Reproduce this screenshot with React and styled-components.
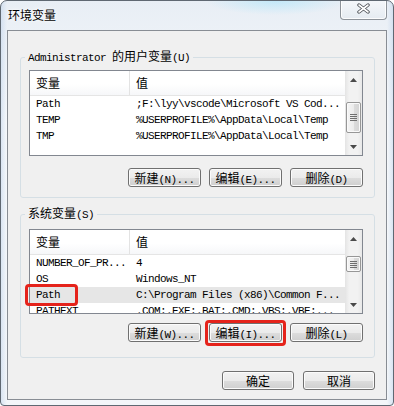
import React from 'react';
import styled, { createGlobalStyle, css } from 'styled-components';

const GlobalStyle = createGlobalStyle`
  html, body { margin: 0; padding: 0; background: #ffffff; }
  body {
    font-family: "Noto Sans CJK SC", sans-serif;
    font-size: 12px;
    color: #000;
  }
  * { box-sizing: border-box; }
`;

const userVars = [
  { name: 'Path', value: ';F:\\lyy\\vscode\\Microsoft VS Cod...' },
  { name: 'TEMP', value: '%USERPROFILE%\\AppData\\Local\\Temp' },
  { name: 'TMP', value: '%USERPROFILE%\\AppData\\Local\\Temp' },
];

const systemVars = [
  { name: 'NUMBER_OF_PR...', value: '4' },
  { name: 'OS', value: 'Windows_NT' },
  { name: 'Path', value: 'C:\\Program Files (x86)\\Common F...', selected: true },
  { name: 'PATHEXT', value: '.COM;.EXE;.BAT;.CMD;.VBS;.VBE;...' },
];

const Arrow = ({ down }) => (
  <svg width="7" height="4" viewBox="0 0 7 4">
    <polygon points={down ? '0,0 7,0 3.5,4' : '0,4 7,4 3.5,0'} fill="#4a4a4a" />
  </svg>
);

const CloseGlyph = () => (
  <svg width="15" height="11" viewBox="0 0 15 11">
    <g strokeLinecap="round">
      <path d="M3 2 L12 9 M12 2 L3 9" stroke="#4b4f55" strokeWidth="3.4" />
      <path d="M3 2 L12 9 M12 2 L3 9" stroke="#ffffff" strokeWidth="1.6" />
    </g>
  </svg>
);

const VarList = ({ rows, height, thumbOffset, thumbSize, marker }) => (
  <ListBox $h={height}>
    <Table>
      <Header>
        <HeadCell $name>变量</HeadCell>
        <HeadCell>值</HeadCell>
      </Header>
      {rows.map((r) => (
        <Row key={r.name} $selected={r.selected}>
          <NameCell>{r.name}</NameCell>
          <ValueCell>{r.value}</ValueCell>
        </Row>
      ))}
    </Table>
    <ScrollBar>
      <ArrowButton><Arrow /></ArrowButton>
      <Track $offset={thumbOffset}>
        <Thumb $size={thumbSize}><Grip /></Thumb>
      </Track>
      <ArrowButton><Arrow down /></ArrowButton>
    </ScrollBar>
    {marker && <RowMarker />}
  </ListBox>
);

export default function App() {
  return (
    <>
      <GlobalStyle />
      <Window>
        <TitleBar>
          <Title>环境变量</Title>
          <CloseButton><CloseGlyph /></CloseButton>
        </TitleBar>
        <Client>
          <Group $top={18} $padTop={5} $padBottom={10}>
            <Legend><Ascii>Administrator </Ascii>的用户变量<Ascii>(U)</Ascii></Legend>
            <VarList rows={userVars} height={86} thumbOffset={14} thumbSize={31} />
            <ButtonRow $gap={12}>
              <Button>新建<Ascii>(N)...</Ascii></Button>
              <Button>编辑<Ascii>(E)...</Ascii></Button>
              <Button>删除<Ascii>(D)</Ascii></Button>
            </ButtonRow>
          </Group>
          <Group $top={8} $padTop={7} $padBottom={15}>
            <Legend>系统变量<Ascii>(S)</Ascii></Legend>
            <VarList rows={systemVars} height={85} thumbOffset={9} thumbSize={16} marker />
            <ButtonRow $gap={9}>
              <Button>新建<Ascii>(W)...</Ascii></Button>
              <Button $marked>编辑<Ascii>(I)...</Ascii></Button>
              <Button>删除<Ascii>(L)</Ascii></Button>
            </ButtonRow>
          </Group>
          <DialogButtons>
            <Button $w={72}>确定</Button>
            <Button $w={72}>取消</Button>
          </DialogButtons>
        </Client>
      </Window>
    </>
  );
}

const Window = styled.div`
  width: 394px;
  height: 406px;
  border: 1px solid #5f6872;
  border-radius: 7px 7px 4px 4px;
  background:
    radial-gradient(ellipse 70px 14px at 275px 0px, rgba(170, 228, 250, 0.6), transparent),
    linear-gradient(90deg, rgba(190, 210, 235, 0.5) 0px, transparent 6px, transparent 386px, rgba(190, 210, 235, 0.5) 392px),
    linear-gradient(180deg, #e8eef5 0%, #f7f9fb 30%, #f3f6f9 100%);
  display: flex;
  flex-direction: column;
  overflow: hidden;
`;

const TitleBar = styled.div`
  height: 29px;
  flex-shrink: 0;
  display: flex;
  justify-content: space-between;
  align-items: flex-start;
  padding-left: 7px;
`;

const Title = styled.div`
  padding-top: 6px;
  font-size: 12px;
  line-height: 16px;
  text-shadow: 0 0 5px #fff, 0 0 2px #fff;
`;

const CloseButton = styled.div`
  width: 47px;
  height: 20px;
  margin-top: -1px;
  margin-right: 6px;
  padding-top: 3px;
  border: 1px solid #8d939a;
  border-top: none;
  border-radius: 0 0 4px 4px;
  background: linear-gradient(180deg, rgba(255, 255, 255, 0.55), rgba(228, 234, 240, 0.8));
  box-shadow: inset 0 0 0 1px rgba(255, 255, 255, 0.85);
  display: flex;
  justify-content: center;
`;

const Client = styled.div`
  flex: 1;
  margin: 0 6px 5px;
  border: 1px solid #888d94;
  background: #f0f0f0;
  display: flex;
  flex-direction: column;
`;

const Group = styled.fieldset`
  margin: ${(p) => p.$top}px 11px 0 12px;
  padding: ${(p) => p.$padTop}px 11px ${(p) => p.$padBottom}px 8px;
  border: 1px solid #d5dfe5;
  border-radius: 3px;
  min-width: 0;
`;

const Legend = styled.legend`
  margin-left: -4px;
  padding: 0 3px;
  font-size: 12px;
  line-height: 14px;
  white-space: nowrap;
`;

const Ascii = styled.span`
  font-family: "Liberation Mono", monospace;
  font-size: 11px;
  letter-spacing: -0.6px;
`;

const ListBox = styled.div`
  position: relative;
  height: ${(p) => p.$h}px;
  border: 1px solid #828790;
  background: #ffffff;
  display: flex;
`;

const Table = styled.div`
  flex: 1;
  min-width: 0;
  overflow: hidden;
`;

const Header = styled.div`
  display: flex;
  height: 25px;
  border-bottom: 1px solid #e5e5e5;
  background: linear-gradient(180deg, #ffffff 0%, #ffffff 55%, #f6f7f9 100%);
`;

const HeadCell = styled.div`
  ${(p) => (p.$name ? 'width: 100px; border-right: 1px solid #e3e3e3;' : 'flex: 1;')}
  padding-left: 6px;
  font-size: 12px;
  line-height: 24px;
`;

const Row = styled.div`
  display: flex;
  height: 16px;
  background: ${(p) => (p.$selected ? '#e6e6e6' : 'transparent')};
  font-family: "Liberation Mono", monospace;
  font-size: 11px;
  letter-spacing: -0.6px;
  line-height: 16px;
  white-space: nowrap;
`;

const NameCell = styled.div`
  width: 100px;
  padding-left: 6px;
  overflow: hidden;
`;

const ValueCell = styled.div`
  flex: 1;
  padding-left: 6px;
  overflow: hidden;
`;

const ScrollBar = styled.div`
  width: 17px;
  flex-shrink: 0;
  display: flex;
  flex-direction: column;
  background: linear-gradient(90deg, #e4e4e4 0%, #f2f2f2 25%, #f2f2f2 75%, #e8e8e8 100%);
`;

const ArrowButton = styled.div`
  height: 17px;
  flex-shrink: 0;
  display: flex;
  align-items: center;
  justify-content: center;
`;

const Track = styled.div`
  flex: 1;
  padding-top: ${(p) => p.$offset}px;
`;

const Thumb = styled.div`
  height: ${(p) => p.$size}px;
  margin: 0 1px;
  border: 1px solid #979797;
  border-radius: 2px;
  background: linear-gradient(90deg, #f5f5f5 0%, #ececec 50%, #dcdcdc 51%, #d4d4d4 100%);
  box-shadow: inset 0 0 0 1px #fafafa;
  display: flex;
  align-items: center;
  justify-content: center;
`;

const Grip = styled.div`
  width: 7px;
  height: 7px;
  background: repeating-linear-gradient(180deg, #6f6f6f 0 1px, transparent 1px 2px);
`;

const RowMarker = styled.div`
  position: absolute;
  left: -5px;
  top: 54px;
  width: 53px;
  height: 22px;
  border: 3px solid #e5231b;
  border-radius: 4px;
  pointer-events: none;
`;

const ButtonRow = styled.div`
  display: flex;
  justify-content: flex-end;
  gap: 8px;
  margin-top: ${(p) => p.$gap}px;
`;

const DialogButtons = styled.div`
  display: flex;
  justify-content: flex-end;
  gap: 9px;
  margin: 13px 11px 0 12px;
`;

const Button = styled.button`
  position: relative;
  width: ${(p) => p.$w || 73}px;
  height: 19px;
  padding: 0;
  border: 1px solid #707070;
  border-radius: 3px;
  background: linear-gradient(180deg, #f2f2f2 0%, #ebebeb 50%, #dddddd 51%, #cfcfcf 100%);
  box-shadow: inset 0 0 0 1px #fbfbfb;
  font-family: "Noto Sans CJK SC", sans-serif;
  font-size: 12px;
  line-height: 17px;
  color: #000;
  white-space: nowrap;

  ${(p) =>
    p.$marked &&
    css`
      &::after {
        content: '';
        position: absolute;
        top: -4px;
        left: -5px;
        right: -5px;
        bottom: -5px;
        border: 3px solid #e5231b;
        border-radius: 4px;
      }
    `}
`;
